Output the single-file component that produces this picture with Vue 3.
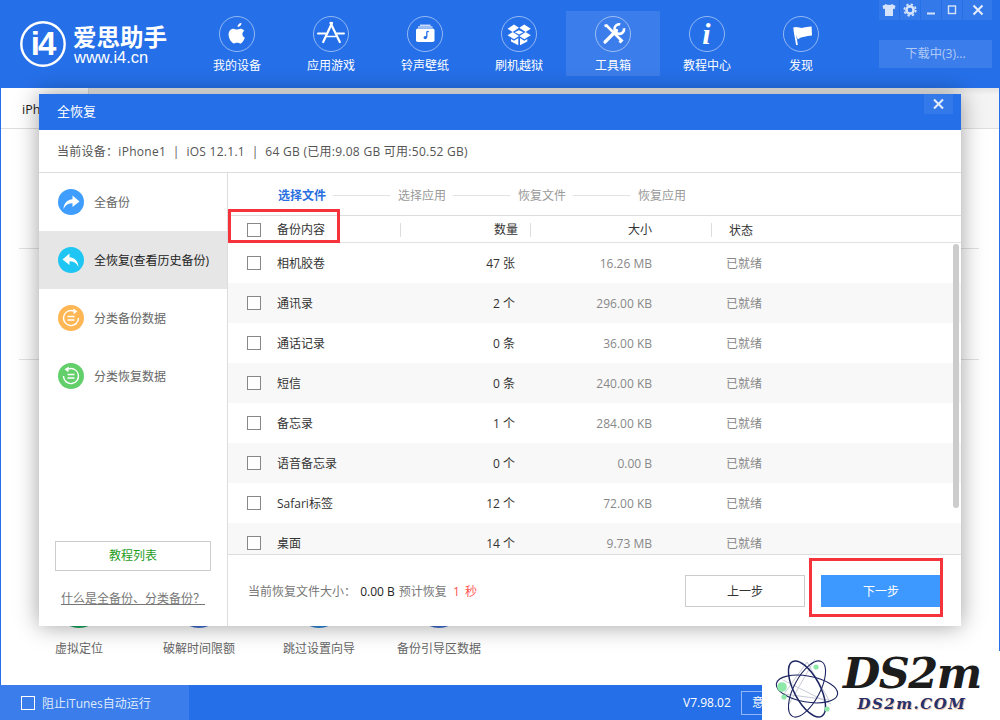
<script setup>
const navItems = [
  { key: 'apple', label: '我的设备' },
  { key: 'store', label: '应用游戏' },
  { key: 'music', label: '铃声壁纸' },
  { key: 'box', label: '刷机越狱' },
  { key: 'tools', label: '工具箱', active: true },
  { key: 'info', label: '教程中心' },
  { key: 'flag', label: '发现' }
]
const sideItems = [
  { key: 'backup', label: '全备份' },
  { key: 'restore', label: '全恢复(查看历史备份)', active: true },
  { key: 'catBackup', label: '分类备份数据' },
  { key: 'catRestore', label: '分类恢复数据' }
]
const steps = ['选择文件', '选择应用', '恢复文件', '恢复应用']
const rows = [
  ['相机胶卷', '47 张', '16.26 MB'],
  ['通讯录', '2 个', '296.00 KB'],
  ['通话记录', '0 条', '36.00 KB'],
  ['短信', '0 条', '240.00 KB'],
  ['备忘录', '1 个', '284.00 KB'],
  ['语音备忘录', '0 个', '0.00 B'],
  ['Safari标签', '12 个', '72.00 KB'],
  ['桌面', '14 个', '9.73 MB']
]
const tools = [
  { label: '虚拟定位', color: '#17a55c' },
  { label: '破解时间限额', color: '#3f6fcf' },
  { label: '跳过设置向导', color: '#2b86d9' },
  { label: '备份引导区数据', color: '#3f6fcf' }
]
</script>

<template>
  <div class="app">
    <header class="topbar">
      <div class="logo">
        <svg class="logo-mark" viewBox="0 0 46 46">
          <circle cx="23" cy="23" r="21.7" fill="none" stroke="#fff" stroke-width="2.4" />
          <text x="22.500" y="34" text-anchor="middle" class="logo-i4">i4</text>
        </svg>
        <div class="logo-text">
          <div class="logo-cn">爱思助手</div>
          <div class="logo-url">www.i4.cn</div>
        </div>
      </div>
      <nav class="nav">
        <div v-for="item in navItems" :key="item.key" class="nav-item" :class="{ active: item.active }">
          <svg class="nav-icon" viewBox="0 0 36 36">
            <circle cx="18" cy="18" r="17.5" fill="none" stroke="#fff" stroke-opacity=".5" />
            <g v-if="item.key === 'apple'" fill="#fff">
              <path d="M22.5 6.8c.1 2.2-1.8 4.4-3.9 4.2-.2-2 1.9-4.1 3.9-4.2z" />
              <path d="M25.4 14.8c-1.2.7-2 1.9-2 3.3 0 1.7 1 3 2.4 3.6-.7 2.2-2.7 5.8-4.7 5.8-1 0-1.6-.7-3-.7s-2 .7-3 .7c-2.5 0-5.5-5.1-5.5-8.9 0-3.7 2.5-5.8 4.9-5.8 1.3 0 2.4.8 3.3.8s2-.9 3.6-.9c1.3 0 2.9.6 4 2.1z" />
            </g>
            <g v-else-if="item.key === 'store'" fill="none" stroke="#fff" stroke-linecap="round">
              <path d="M19 7 10.200 26" stroke-width="2.2" />
              <path d="M17.500 7 26.800 26" stroke-width="2.200" />
              <path d="M5 17.500h7.500M23.500 17.500H31" stroke-width="2" />
              <path d="M13.500 20.500h9" stroke-width="1.400" />
            </g>
            <g v-else-if="item.key === 'music'">
              <path d="M13 9.200h10.500" stroke="#fff" stroke-width="1.100" />
              <path d="M11 11h14.500" stroke="#fff" stroke-width="1.100" />
              <rect x="9" y="12.500" width="18.500" height="13.500" rx="1.800" fill="#fff" />
              <path d="M19.800 15.500v6" stroke="#256fe8" stroke-width="1.300" />
              <path d="M19.800 15.500h2" stroke="#256fe8" stroke-width="1.300" />
              <circle cx="18.300" cy="21.600" r="1.700" fill="#256fe8" />
            </g>
            <g v-else-if="item.key === 'box'" fill="#fff">
              <path d="M6.500 12.800 13 8.500l5 3.300-6.300 4.200z" />
              <path d="M29.800 12.800 23.300 8.500l-5 3.300 6.300 4.200z" />
              <path d="M6.500 19.300 11.700 16l6.300 4-5 3.300z" />
              <path d="M29.800 19.300 24.600 16l-6.300 4 5 3.300z" />
              <path d="m18 14.300 4.300 1.900L18 18.600l-4.300-2.400z" />
              <path d="m10 23 3 1.800 4.300-2.800v7.300L10 25.500zM26.300 23l-3 1.800-4.300-2.800v7.300l7.300-3.800z" />
            </g>
            <g v-else-if="item.key === 'tools'" fill="none" stroke="#fff">
              <path d="M9.500 10 11.500 9.500 26.500 24.500" stroke-width="2.600" />
              <path d="M27.500 23.500 24.500 26.500" stroke-width="3" />
              <path d="M10 26 21.500 14.500" stroke-width="3.200" stroke-linecap="round" />
              <path d="M25.200 8.400a4.800 4.800 0 1 0 3.800 3.900" stroke-width="2.600" />
            </g>
            <text v-else-if="item.key === 'info'" x="17.500" y="27.500" text-anchor="middle" class="nav-i">i</text>
            <g v-else>
              <path d="M10 11.800c3.800-2.300 6.800.6 10 0 3-.5 6-1.400 8.600-1.200l.4 8.800c-3 0-5.600 1-8.600 1.500-2 .3-4 1-5.500 2.500z" fill="#fff" />
              <path d="M11.300 13.500 14 29" stroke="#fff" stroke-width="1.800" fill="none" />
            </g>
          </svg>
          <span class="nav-label">{{ item.label }}</span>
        </div>
      </nav>
      <div class="top-right">
        <div class="win-controls">
          <span class="win-btn">
            <svg viewBox="0 0 20 20" class="win-icon"><path d="M7 4 3.500 6l1 3.200L6 8.800V16h8V8.800l1.500.4 1-3.200L13 4c-.8 1.200-5.200 1.200-6 0z" fill="#d6e4fb" /></svg>
          </span>
          <span class="win-btn">
            <svg viewBox="0 0 20 20" class="win-icon"><circle cx="10" cy="10" r="3.600" fill="none" stroke="#d6e4fb" stroke-width="2.600" /><circle cx="10" cy="10" r="5.800" fill="none" stroke="#d6e4fb" stroke-width="1.600" stroke-dasharray="2.400 2.150" /></svg>
          </span>
          <span class="win-btn">
            <svg viewBox="0 0 20 20" class="win-icon"><path d="M6 13.500h8" stroke="#d6e4fb" stroke-width="2" /></svg>
          </span>
          <span class="win-btn">
            <svg viewBox="0 0 20 20" class="win-icon"><rect x="6.500" y="6" width="7" height="7.500" fill="none" stroke="#d6e4fb" stroke-width="1.400" /></svg>
          </span>
          <span class="win-btn win-close">
            <svg viewBox="0 0 20 20" class="win-icon"><path d="m5.500 5.500 9 9m0-9-9 9" stroke="#e6eefc" stroke-width="2" /></svg>
          </span>
        </div>
        <div class="download">下载中(3)...</div>
      </div>
    </header>

    <main class="page">
      <div class="tabbar">
        <div class="tab">iPhone</div>
      </div>
      <div class="section first"></div>
      <div class="section"></div>
      <div class="tool-grid">
        <div v-for="t in tools" :key="t.label" class="tool">
          <span class="tool-icon" :style="{ background: t.color }"></span>
          <span class="tool-label">{{ t.label }}</span>
        </div>
      </div>
    </main>

    <footer class="statusbar">
      <div class="status-left">
        <span class="status-check"></span>
        <span>阻止iTunes自动运行</span>
      </div>
      <div class="status-right">
        <span class="version">V7.98.02</span>
        <span class="feedback">意见反馈</span>
      </div>
    </footer>

    <section class="modal">
      <div class="modal-head">
        <span>全恢复</span>
        <span class="modal-close">
          <svg viewBox="0 0 29 20" class="modal-x"><path d="m10 5.500 9 9m0-9-9 9" stroke="#e6eefc" stroke-width="2" /></svg>
        </span>
      </div>
      <div class="device">当前设备：iPhone1 &nbsp;|&nbsp; iOS 12.1.1 &nbsp;|&nbsp; 64 GB (已用:9.08 GB 可用:50.52 GB)</div>
      <div class="modal-main">
        <aside class="side">
          <div v-for="s in sideItems" :key="s.key" class="side-item" :class="{ active: s.active }">
            <svg class="side-icon" viewBox="0 0 26 26">
              <template v-if="s.key === 'backup'">
                <circle cx="13" cy="13" r="13" fill="#3f9efd" />
                <path d="M14.500 6.500 21.500 12.500 14.500 18V14.300C10.500 14.300 7.500 16 5.500 20 5.800 14.500 9 10.800 14.500 10.300z" fill="#fff" />
              </template>
              <template v-else-if="s.key === 'restore'">
                <circle cx="13" cy="13" r="13" fill="#1fc6f3" />
                <path d="M11.500 6.500 4.500 12.500 11.500 18V14.300C15.500 14.300 18.500 16 20.500 20 20.200 14.500 17 10.800 11.500 10.300z" fill="#fff" />
              </template>
              <template v-else-if="s.key === 'catBackup'">
                <circle cx="13" cy="13" r="13" fill="#ffb655" />
                <path d="M20.500 13a7.500 7.500 0 1 1-5-7" fill="none" stroke="#fff" stroke-width="1.400" />
                <path d="m15 3.500 4.500 2.800-3.800 3z" fill="#fff" />
                <path d="M9.500 11.500h7M9.500 15h7" stroke="#fff" stroke-width="1.300" />
              </template>
              <template v-else>
                <circle cx="13" cy="13" r="13" fill="#62cf6a" />
                <path d="M5.500 13a7.500 7.500 0 1 0 5-7" fill="none" stroke="#fff" stroke-width="1.400" />
                <path d="M11 3.500 6.500 6.300l3.800 3z" fill="#fff" />
                <path d="M9.500 11.500h7M9.500 15h7" stroke="#fff" stroke-width="1.300" />
              </template>
            </svg>
            <span>{{ s.label }}</span>
          </div>
          <div class="side-foot">
            <div class="tutorial">教程列表</div>
            <div class="help-link">什么是全备份、分类备份？</div>
          </div>
        </aside>
        <div class="content">
          <div class="steps">
            <template v-for="(st, i) in steps" :key="st">
              <span v-if="i" class="step-line"></span>
              <span class="step" :class="{ current: i === 0 }">{{ st }}</span>
            </template>
          </div>
          <div class="table-head">
            <div class="th th-name"><span class="check"></span><span>备份内容</span></div>
            <div class="th th-count">数量</div>
            <div class="th th-size">大小</div>
            <div class="th-status">状态</div>
          </div>
          <div class="table-body">
            <div v-for="r in rows" :key="r[0]" class="row">
              <div class="td-name"><span class="check"></span><span>{{ r[0] }}</span></div>
              <div class="td-count">{{ r[1] }}</div>
              <div class="td-size">{{ r[2] }}</div>
              <div class="td-status">已就绪</div>
            </div>
            <span class="scrollbar"></span>
          </div>
          <div class="modal-foot">
            <div class="summary">当前恢复文件大小： <b>0.00 B</b> 预计恢复 <em>1 秒</em></div>
            <div class="actions">
              <button class="btn">上一步</button>
              <button class="btn primary">下一步</button>
            </div>
          </div>
        </div>
      </div>
      <span class="mark mark-head"></span>
      <span class="mark mark-next"></span>
    </section>

    <div class="watermark">
      <svg class="atom" viewBox="0 0 64 66">
        <g fill="none" stroke="#b9bdcc" stroke-width=".8">
          <path d="M32 8 54 46 9 40z" />
          <path d="M8 26 56 50M40 5 14 50" />
        </g>
        <g fill="none" stroke="#1c2560" stroke-width="1.500">
          <ellipse cx="32" cy="35" rx="13" ry="31" transform="rotate(-28 32 35)" />
          <ellipse cx="32" cy="35" rx="13" ry="31" transform="rotate(-80 32 35)" stroke-width="1.100" />
          <ellipse cx="32" cy="35" rx="13" ry="31" transform="rotate(28 32 35)" stroke-width="1.100" />
        </g>
        <g fill="#8ee8a8">
          <circle cx="7" cy="33" r="4.800" />
          <circle cx="9" cy="43" r="2.600" />
          <circle cx="41" cy="13" r="2.600" />
          <circle cx="52" cy="55" r="2.600" />
        </g>
      </svg>
      <div class="wm-text">
        <div class="wm-big">DS2m</div>
        <div class="wm-small">DS2m.COM</div>
      </div>
    </div>
  </div>
</template>

<style>
html, body { margin: 0; padding: 0; background: #fff; }
</style>

<style scoped>
.app {
  position: relative;
  width: 1000px;
  height: 720px;
  overflow: hidden;
  display: flex;
  flex-direction: column;
  background: #fff;
  font-family: "Open Sans", "Noto Sans CJK SC", sans-serif;
  font-size: 12px;
  color: #444;
}

/* top bar */
.topbar {
  flex: none;
  height: 88px;
  display: flex;
  background: #256fe8;
  color: #fff;
}
.logo {
  width: 190px;
  flex: none;
  display: flex;
  box-sizing: border-box;
  padding: 21px 0 0 20px;
}
.logo-mark { width: 46px; height: 46px; flex: none; }
.logo-i4 {
  font-family: "Liberation Sans", sans-serif;
  font-weight: 700;
  font-size: 33px;
  fill: #fff;
  letter-spacing: -2px;
}
.logo-text { margin-left: 7px; margin-top: 3px; }
.logo-cn {
  font-family: "Noto Sans CJK SC", sans-serif;
  font-size: 23.500px;
  line-height: 25px;
  font-weight: 700;
  white-space: nowrap;
}
.logo-url {
  font-family: "Liberation Sans", sans-serif;
  font-size: 16.500px;
  line-height: 17px;
  margin-left: 1px;
}
.nav { display: flex; }
.nav-item {
  width: 94px;
  height: 65px;
  margin-top: 11px;
  display: flex;
  flex-direction: column;
  align-items: center;
  padding-top: 5px;
  box-sizing: border-box;
}
.nav-item.active { background: rgba(255, 255, 255, 0.1); }
.nav-icon { width: 36px; height: 36px; flex: none; }
.nav-i {
  font-family: "Liberation Serif", serif;
  font-style: italic;
  font-weight: 700;
  font-size: 30px;
  fill: #fff;
}
.nav-label { line-height: 18px; margin-top: 5px; white-space: nowrap; }
.top-right { margin-left: 31px; width: 113px; flex: none; }
.win-controls { display: flex; gap: 1px; }
.win-btn {
  width: 20px;
  height: 20px;
  background: rgba(255, 255, 255, 0.07);
  display: block;
}
.win-close { width: 29px; display: flex; justify-content: center; }
.win-icon { width: 20px; height: 20px; display: block; }
.download {
  margin-top: 20px;
  height: 28px;
  line-height: 28px;
  text-align: center;
  background: rgba(255, 255, 255, 0.1);
  color: rgba(255, 255, 255, 0.6);
  font-size: 12.200px;
}

/* page behind the dialog */
.page {
  flex: 1;
  min-height: 0;
  display: flex;
  flex-direction: column;
  border-left: 1px solid #256fe8;
  border-right: 1px solid #256fe8;
  background: #fff;
}
.tabbar {
  flex: none;
  height: 41px;
  box-sizing: border-box;
  background: linear-gradient(#e4e4e4, #f4f4f4 7px);
  border-bottom: 1px solid #dedede;
  display: flex;
}
.tab {
  width: 88px;
  box-sizing: border-box;
  background: #fff;
  border-right: 1px solid #ddd;
  padding: 13px 0 0 21px;
  color: #222;
  font-size: 12.500px;
  line-height: 18px;
}
.section {
  flex: none;
  height: 111px;
  box-sizing: border-box;
  margin: 0 20px 0 18px;
  border-bottom: 1px solid #e2e2e2;
}
.section.first { height: 120px; }
.tool-grid {
  margin-top: auto;
  display: grid;
  grid-template-columns: repeat(4, 120px);
  padding: 0 0 27px 18px;
}
.tool {
  display: flex;
  flex-direction: column;
  align-items: center;
  color: #666;
}
.tool-icon { width: 50px; height: 50px; border-radius: 50%; }
.tool-label { line-height: 18px; margin-top: 12px; }

/* status bar */
.statusbar {
  flex: none;
  height: 35px;
  display: flex;
  justify-content: space-between;
  background: #256fe8;
  color: #fff;
}
.status-left {
  width: 189px;
  display: flex;
  align-items: center;
  box-sizing: border-box;
  padding-left: 21px;
  background: rgba(255, 255, 255, 0.1);
  color: #dfeafc;
}
.status-check {
  width: 12px;
  height: 12px;
  border: 1px solid #fff;
  margin-right: 7px;
}
.status-right {
  display: flex;
  align-items: center;
  width: 317px;
  flex: none;
}
.version { width: 58px; font-size: 12px; }
.feedback {
  height: 22px;
  line-height: 22px;
  padding: 0 10px;
  border: 1px solid rgba(255, 255, 255, 0.5);
}

/* dialog */
.modal {
  position: absolute;
  left: 39px;
  top: 94px;
  width: 922px;
  height: 532px;
  display: flex;
  flex-direction: column;
  background: #fff;
  box-shadow: 0 0 22px rgba(0, 0, 0, 0.38);
}
.modal-head {
  flex: none;
  height: 36px;
  display: flex;
  justify-content: space-between;
  background: #256fe8;
  color: #fff;
  font-size: 13px;
  line-height: 35px;
  padding-left: 18px;
  padding-right: 8px;
}
.modal-close {
  width: 29px;
  height: 20px;
  background: rgba(255, 255, 255, 0.07);
}
.modal-x { width: 29px; height: 20px; display: block; }
.device {
  flex: none;
  height: 43px;
  box-sizing: border-box;
  border-bottom: 1px solid #ddd;
  line-height: 44px;
  padding-left: 18px;
  color: #555;
  white-space: nowrap;
  letter-spacing: 0.27px;
}
.modal-main { flex: 1; min-height: 0; display: flex; }
.side {
  width: 189px;
  flex: none;
  box-sizing: border-box;
  border-right: 1px solid #ddd;
  display: flex;
  flex-direction: column;
}
.side-item {
  height: 58px;
  flex: none;
  display: flex;
  align-items: center;
  padding-left: 19px;
  color: #666;
  white-space: nowrap;
}
.side-item.active { background: #e6e6e6; color: #222; }
.side-icon { width: 26px; height: 26px; margin-right: 10px; flex: none; }
.side-foot { margin-top: auto; padding: 0 16px 18px; }
.tutorial {
  height: 28px;
  line-height: 28px;
  text-align: center;
  border: 1px solid #ccc;
  color: #1f9c1f;
}
.help-link {
  margin-top: 19px;
  text-align: center;
  color: #777;
  text-decoration: underline;
  line-height: 18px;
  white-space: nowrap;
}
.content { flex: 1; min-width: 0; display: flex; flex-direction: column; }
.steps {
  flex: none;
  height: 42px;
  box-sizing: border-box;
  padding: 2px 0 0 50px;
  display: flex;
  align-items: center;
  gap: 7px;
}
.step { color: #999; width: 48px; white-space: nowrap; }
.step.current { color: #2a6fe0; font-weight: 700; }
.step-line { width: 57px; height: 1px; background: #e2e2e2; margin-right: 1px; }
.table-head {
  flex: none;
  height: 28px;
  box-sizing: border-box;
  border-top: 1px solid #ddd;
  border-bottom: 1px solid #e2e2e2;
  padding-top: 1px;
  display: grid;
  grid-template-columns: 173px 130px 181px 1fr;
  align-items: center;
  color: #333;
}
.th {
  height: 14px;
  line-height: 14px;
  border-right: 1px solid #ddd;
  box-sizing: content-box;
  white-space: nowrap;
}
.th-name, .td-name { display: flex; align-items: center; padding-left: 19px; }
.th-count { text-align: right; padding-right: 12px; }
.th-size { text-align: right; padding-right: 59px; }
.th-status { padding-left: 17px; }
.check {
  width: 12px;
  height: 12px;
  border: 1px solid #888;
  margin-right: 16px;
  background: #fff;
  flex: none;
}
.table-body {
  position: relative;
  flex: 1;
  min-height: 0;
  overflow: hidden;
}
.row {
  height: 40px;
  display: grid;
  grid-template-columns: 173px 130px 181px 1fr;
  align-items: center;
}
.row:nth-child(even) { background: #f8f8f8; }
.td-name { color: #333; }
.td-count { text-align: right; padding-right: 16px; color: #333; }
.td-size { text-align: right; padding-right: 60px; color: #888; }
.td-status { padding-left: 14px; color: #888; }
.scrollbar {
  position: absolute;
  right: 2px;
  top: 1px;
  width: 6px;
  height: 264px;
  border-radius: 3px;
  background: #ccc;
}
.modal-foot {
  flex: none;
  height: 72px;
  box-sizing: border-box;
  border-top: 1px solid #ddd;
  display: flex;
  justify-content: space-between;
  align-items: center;
  padding: 0 20px;
}
.summary { color: #777; white-space: nowrap; }
.summary b { font-weight: 400; color: #222; margin-left: 1px; margin-right: 1px; }
.summary em { font-style: normal; color: #f55; margin-left: 3px; word-spacing: 2px; }
.actions { display: flex; gap: 16px; }
.btn {
  width: 120px;
  height: 32px;
  box-sizing: border-box;
  border: 1px solid #ccc;
  background: #fff;
  color: #333;
  font: inherit;
  padding: 0;
}
.btn.primary { background: #3d98ff; border-color: #3d98ff; color: #fff; }
.mark {
  position: absolute;
  box-sizing: border-box;
  border: 3px solid #f4343a;
  pointer-events: none;
}
.mark-head { left: 189px; top: 115px; width: 112px; height: 34px; }
.mark-next { left: 770px; top: 464px; width: 134px; height: 59px; }

/* watermark */
.watermark {
  position: absolute;
  right: 0;
  bottom: 0;
  width: 238px;
  height: 69px;
  box-sizing: border-box;
  background: #fff;
  display: flex;
  padding-left: 13px;
}
.atom { width: 64px; height: 66px; flex: none; margin-top: 3px; }
.wm-text { margin-left: 4px; text-align: center; }
.wm-big {
  font-family: "DejaVu Serif", serif;
  font-style: italic;
  font-weight: 700;
  font-size: 43px;
  line-height: 44px;
  letter-spacing: -1.500px;
  color: #1c1c1c;
  white-space: nowrap;
}
.wm-small {
  font-family: "DejaVu Serif", serif;
  font-style: italic;
  font-weight: 700;
  font-size: 15px;
  line-height: 18px;
  letter-spacing: 1.500px;
  color: #27306a;
  text-shadow: 1px 1px 0 #eec3a8;
  white-space: nowrap;
}
</style>
